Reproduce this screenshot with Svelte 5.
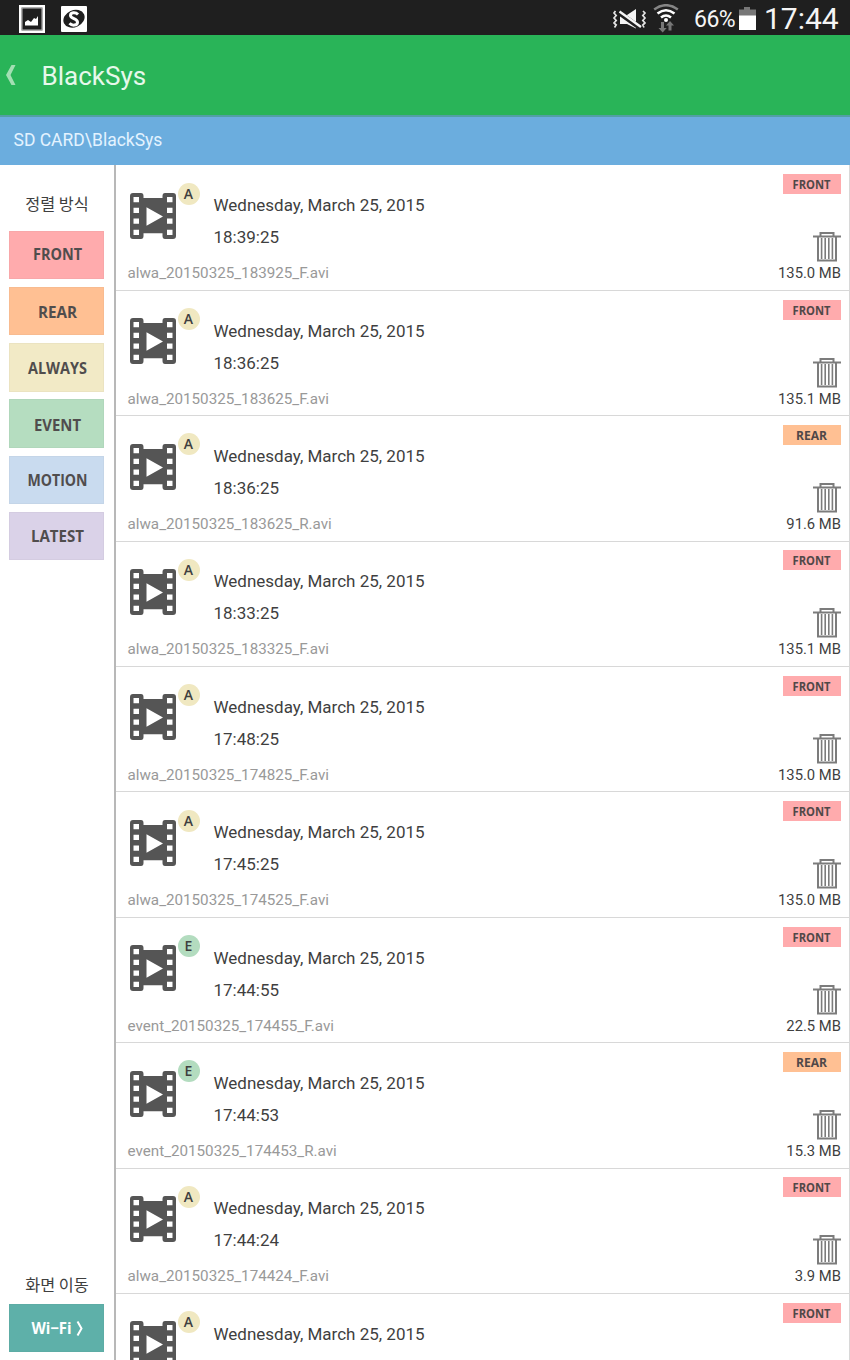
<script>
  const filters = [
    { label: 'FRONT', color: '#ffabad', shift: -0.5, w: 49 },
    { label: 'REAR', color: '#ffc093', shift: 0.7, w: 39 },
    { label: 'ALWAYS', color: '#f2eac6', shift: 1, w: 59 },
    { label: 'EVENT', color: '#b5ddc0', shift: 1.5, w: 47 },
    { label: 'MOTION', color: '#c9dbef', shift: 0.6, w: 60 },
    { label: 'LATEST', color: '#dad2e8', shift: 0, w: 53 }
  ];
  const files = [
    ['A', '18:39:25', 'alwa_20150325_183925_F.avi', 'FRONT', '135.0 MB'],
    ['A', '18:36:25', 'alwa_20150325_183625_F.avi', 'FRONT', '135.1 MB'],
    ['A', '18:36:25', 'alwa_20150325_183625_R.avi', 'REAR', '91.6 MB'],
    ['A', '18:33:25', 'alwa_20150325_183325_F.avi', 'FRONT', '135.1 MB'],
    ['A', '17:48:25', 'alwa_20150325_174825_F.avi', 'FRONT', '135.0 MB'],
    ['A', '17:45:25', 'alwa_20150325_174525_F.avi', 'FRONT', '135.0 MB'],
    ['E', '17:44:55', 'event_20150325_174455_F.avi', 'FRONT', '22.5 MB'],
    ['E', '17:44:53', 'event_20150325_174453_R.avi', 'REAR', '15.3 MB'],
    ['A', '17:44:24', 'alwa_20150325_174424_F.avi', 'FRONT', '3.9 MB'],
    ['A', '17:34:18', '', 'FRONT', '']
  ].map(([kind, time, name, camera, size]) => ({ kind, time, name, camera, size }));
</script>

<div class="screen">
  <div class="status">
    <svg class="pic" width="26" height="28" viewBox="0 0 26 28">
      <rect x="1.300" y="1.300" width="23.400" height="25.400" fill="none" stroke="#fff" stroke-width="2.600" />
      <rect x="3" y="3" width="20" height="22" fill="none" stroke="#bbb" stroke-width="1" />
      <path d="M6 20.500V17l3-2 3 2 3-4 2 1 2-3v9.500z" fill="#fff" />
    </svg>
    <svg class="app" width="26" height="26" viewBox="0 0 26 26">
      <rect width="26" height="26" rx="1" fill="#fff" />
      <ellipse cx="13" cy="12.700" rx="11" ry="8.500" transform="rotate(-24 13 12.700)" fill="#1f1f1f" />
      <path d="M17 8.500C14.500 6 9.500 6.300 9.500 9.500C9.500 13 16.500 12.500 16.500 16.200C16.500 19.800 11 20 8.500 17.300" fill="none" stroke="#fff" stroke-width="3" />
    </svg>
    <span class="grow"></span>
    <svg class="mute" width="36" height="24" viewBox="0 0 36 24">
      <path d="M8 7h7l9-6v19.500l-9-4.500H8z" fill="#f5f5f5" />
      <path d="M6 4L29 20.500" stroke="#1f1f1f" stroke-width="4.800" />
      <path d="M7.500 3.500L29 19" stroke="#f5f5f5" stroke-width="2.400" />
      <path d="M3.500 3L2 5l2.200 2.500L2 10l2.200 2.500L2 15l2.200 2L2.500 19.500M31 3l2 2-2.200 2.500L33 10l-2.200 2.500L33 15l-2.200 2L32 19.500" fill="none" stroke="#e4e4e4" stroke-width="1.700" />
    </svg>
    <svg class="wifi" width="26" height="30" viewBox="0 0 26 30">
      <path d="M1.200 5.500Q13-3 24.800 5.500" fill="none" stroke="#858585" stroke-width="2.600" />
      <path d="M4.500 9.500Q13 3 21.500 9.500M8 13.500Q13 9.500 18 13.500" fill="none" stroke="#fff" stroke-width="2.600" />
      <circle cx="13" cy="16" r="2" fill="#fff" />
      <path d="M8 18v6H5.500l4.200 4.500 4-4.500H11v-6zM15.500 26.500v-5H13l4-4.500 4 4.500h-2.500v5z" fill="#777" />
    </svg>
    <span class="percent">66%</span>
    <svg class="battery" width="17" height="23" viewBox="0 0 17 23">
      <path d="M0 2.500h5V0h6v2.500h6V9H0z" fill="#777" />
      <rect y="8.500" width="17" height="14.500" fill="#fff" />
    </svg>
    <span class="clock">17:44</span>
  </div>
  <header>
    <svg width="12" height="22" viewBox="0 0 12 22"><path d="M6.500 1h4L5.500 11l5 10h-4L1 11z" fill="#a3dfb3" /></svg>
    <h1>BlackSys</h1>
  </header>
  <div class="path"><span>SD CARD\BlackSys</span></div>
  <main>
    <aside>
      <div class="label">정렬 방식</div>
      <div class="filters">
        {#each filters as f}
          <button style:background={f.color}>
            <svg width="94" height="30"><text x="48.5" y={20.8 + f.shift} text-anchor="middle" textLength={f.w} lengthAdjust="spacingAndGlyphs">{f.label}</text></svg>
          </button>
        {/each}
      </div>
      <div class="label move">화면 이동</div>
      <button class="wifi-button">
        <svg width="94" height="30" viewBox="0 0 94 30">
          <text x="22.500" y="21" textLength="40" lengthAdjust="spacingAndGlyphs">Wi−Fi</text>
          <path d="M68.500 8.500l4 7-4 7" fill="none" stroke="#fff" stroke-width="2" />
        </svg>
      </button>
    </aside>
    <section>
      {#each files as f}
        <article>
          <div class="top">
            <div class="media">
              <svg width="46" height="46" viewBox="0 0 46 47" preserveAspectRatio="none">
                <path fill="#555" fill-rule="evenodd" d="M3 0h8q2.500 0 2.500 3v2h19V3q0-3 2.500-3h8q3 0 3 3v41q0 3-3 3h-8q-2.500 0-2.500-3v-3h-19v3q0 3-2.500 3H3q-3 0-3-3V3Q0 0 3 0zM3.500 4v5.500H9V4zM3.500 15v5.500H9V15zM3.500 26v5.500H9V26zM3.500 37.500V43H9v-5.500zM37 4v5.500h5.500V4zM37 15v5.500h5.500V15zM37 26v5.500h5.500V26zM37 37.500V43h5.500v-5.500zM16.500 14.500v19L33 24z" />
              </svg>
              <span class="badge" class:event={f.kind === 'E'}>{f.kind}</span>
            </div>
            <div class="info">
              <div>Wednesday, March 25, 2015</div>
              <div class="time">{f.time}</div>
            </div>
            <div class="side">
              <div class="tag" class:rear={f.camera === 'REAR'}>
                <svg width="58" height="20"><text x="28.500" y="14.500" text-anchor="middle" textLength={f.camera === 'REAR' ? 31 : 38} lengthAdjust="spacingAndGlyphs">{f.camera}</text></svg>
              </div>
              <svg class="trash" width="28" height="30" viewBox="0 0 28 30" fill="none" stroke="#7c7c7c">
                <path d="M0 4.500h28M7.500 4V1h13v3M5 4.500v24h18v-24" stroke-width="2" />
                <path d="M8.600 6v21M12.200 6v21M15.800 6v21M19.400 6v21" stroke-width="1.600" />
              </svg>
            </div>
          </div>
          <div class="bottom"><span class="name">{f.name}</span><span class="size">{f.size}</span></div>
        </article>
      {/each}
    </section>
  </main>
</div>

<style>
  :global(body) { margin: 0; background: #fff; }
  .screen { width: 850px; height: 1360px; overflow: hidden; display: flex; flex-direction: column; font-family: Roboto, "Noto Sans CJK KR", sans-serif; color: #3f3f3f; }
  svg { display: block; flex: none; }
  .status { flex: none; height: 35px; background: #1f1f1f; display: flex; align-items: flex-start; color: #f5f5f5; box-sizing: border-box; padding: 0 11px 0 19px; white-space: nowrap; }
  .pic { margin-top: 5px; }
  .app { margin: 6px 0 0 16px; }
  .grow { flex: 1; }
  .mute { margin: 8px 5px 0 0; }
  .wifi { margin: 4px 15px 0 0; }
  .percent { font-size: 23px; line-height: 40px; width: 42px; letter-spacing: -.5px; margin-right: 3px; }
  .battery { margin: 7px 8px 0 0; }
  .clock { font-size: 30px; line-height: 37px; width: 75px; letter-spacing: 0; }
  header { flex: none; height: 80px; background: #29b458; display: flex; align-items: center; box-sizing: border-box; padding-left: 5px; }
  h1 { margin: 2px 0 0 24.500px; color: #e6f8eb; font-size: 26px; font-weight: 400; line-height: 32px; letter-spacing: 0; }
  .path { flex: none; height: 49.500px; box-sizing: border-box; background: #6badde; border-top: 2px solid #529fa5; display: flex; align-items: center; padding: 0 0 2px 13.500px; color: #e3f3ff; font-size: 17.500px; }
  main { flex: 1; min-height: 0; display: flex; }
  aside { width: 116px; box-sizing: border-box; border-right: 2px solid #b8b8b8; padding: 23.500px 9px 8px; display: flex; flex-direction: column; }
  .label { height: 30px; line-height: 30px; text-align: center; font-family: "Noto Sans CJK KR", sans-serif; font-size: 16.300px; white-space: nowrap; }
  .filters { display: flex; flex-direction: column; gap: 7.800px; margin-top: 12.500px; }
  button { border: 0; padding: 0; width: 95px; height: 48.500px; display: flex; align-items: center; border-radius: 0; box-shadow: inset 0 0 0 1px rgba(80, 80, 80, .04); }
  button text { font: 700 16px "Open Sans", sans-serif; fill: #504d4d; }
  .move { margin-top: auto; margin-bottom: 5px; }
  .wifi-button { background: #5eb0a9; flex: none; }
  .wifi-button text { fill: #fff; }
  section { flex: 1; min-width: 0; overflow: hidden; border-right: 1px solid #d8d8d8; margin-left: -1px; padding: 1px 0 0 1px; }
  article { height: 125.400px; box-sizing: border-box; border-bottom: 1px solid #d8d8d8; padding: 0 8px 0 11.500px; }
  .top { height: 97.700px; display: flex; }
  .media { position: relative; width: 86px; padding: 27.300px 0 0 2px; box-sizing: border-box; flex: none; }
  .badge { position: absolute; left: 50px; top: 17.200px; width: 22px; height: 22px; border-radius: 50%; background: #f0e8c1; font: 600 14px/22px "Open Sans", sans-serif; text-align: center; }
  .badge.event { background: #b3dcbf; }
  .info { padding-top: 23.800px; flex: 1; font-size: 17px; line-height: 32px; }
  .side { display: flex; flex-direction: column; align-items: flex-end; padding-top: 8.700px; }
  .tag { background: #ffabad; width: 58px; height: 20px; }
  .tag.rear { background: #ffc093; }
  .tag text { font: 700 12px "Open Sans", sans-serif; fill: #504848; }
  .trash { margin: 38px 0 0; }
  .bottom { display: flex; justify-content: space-between; font-size: 15.200px; line-height: 20px; }
  .size { font-size: 14.800px; }
  .name { color: #999; }
</style>
